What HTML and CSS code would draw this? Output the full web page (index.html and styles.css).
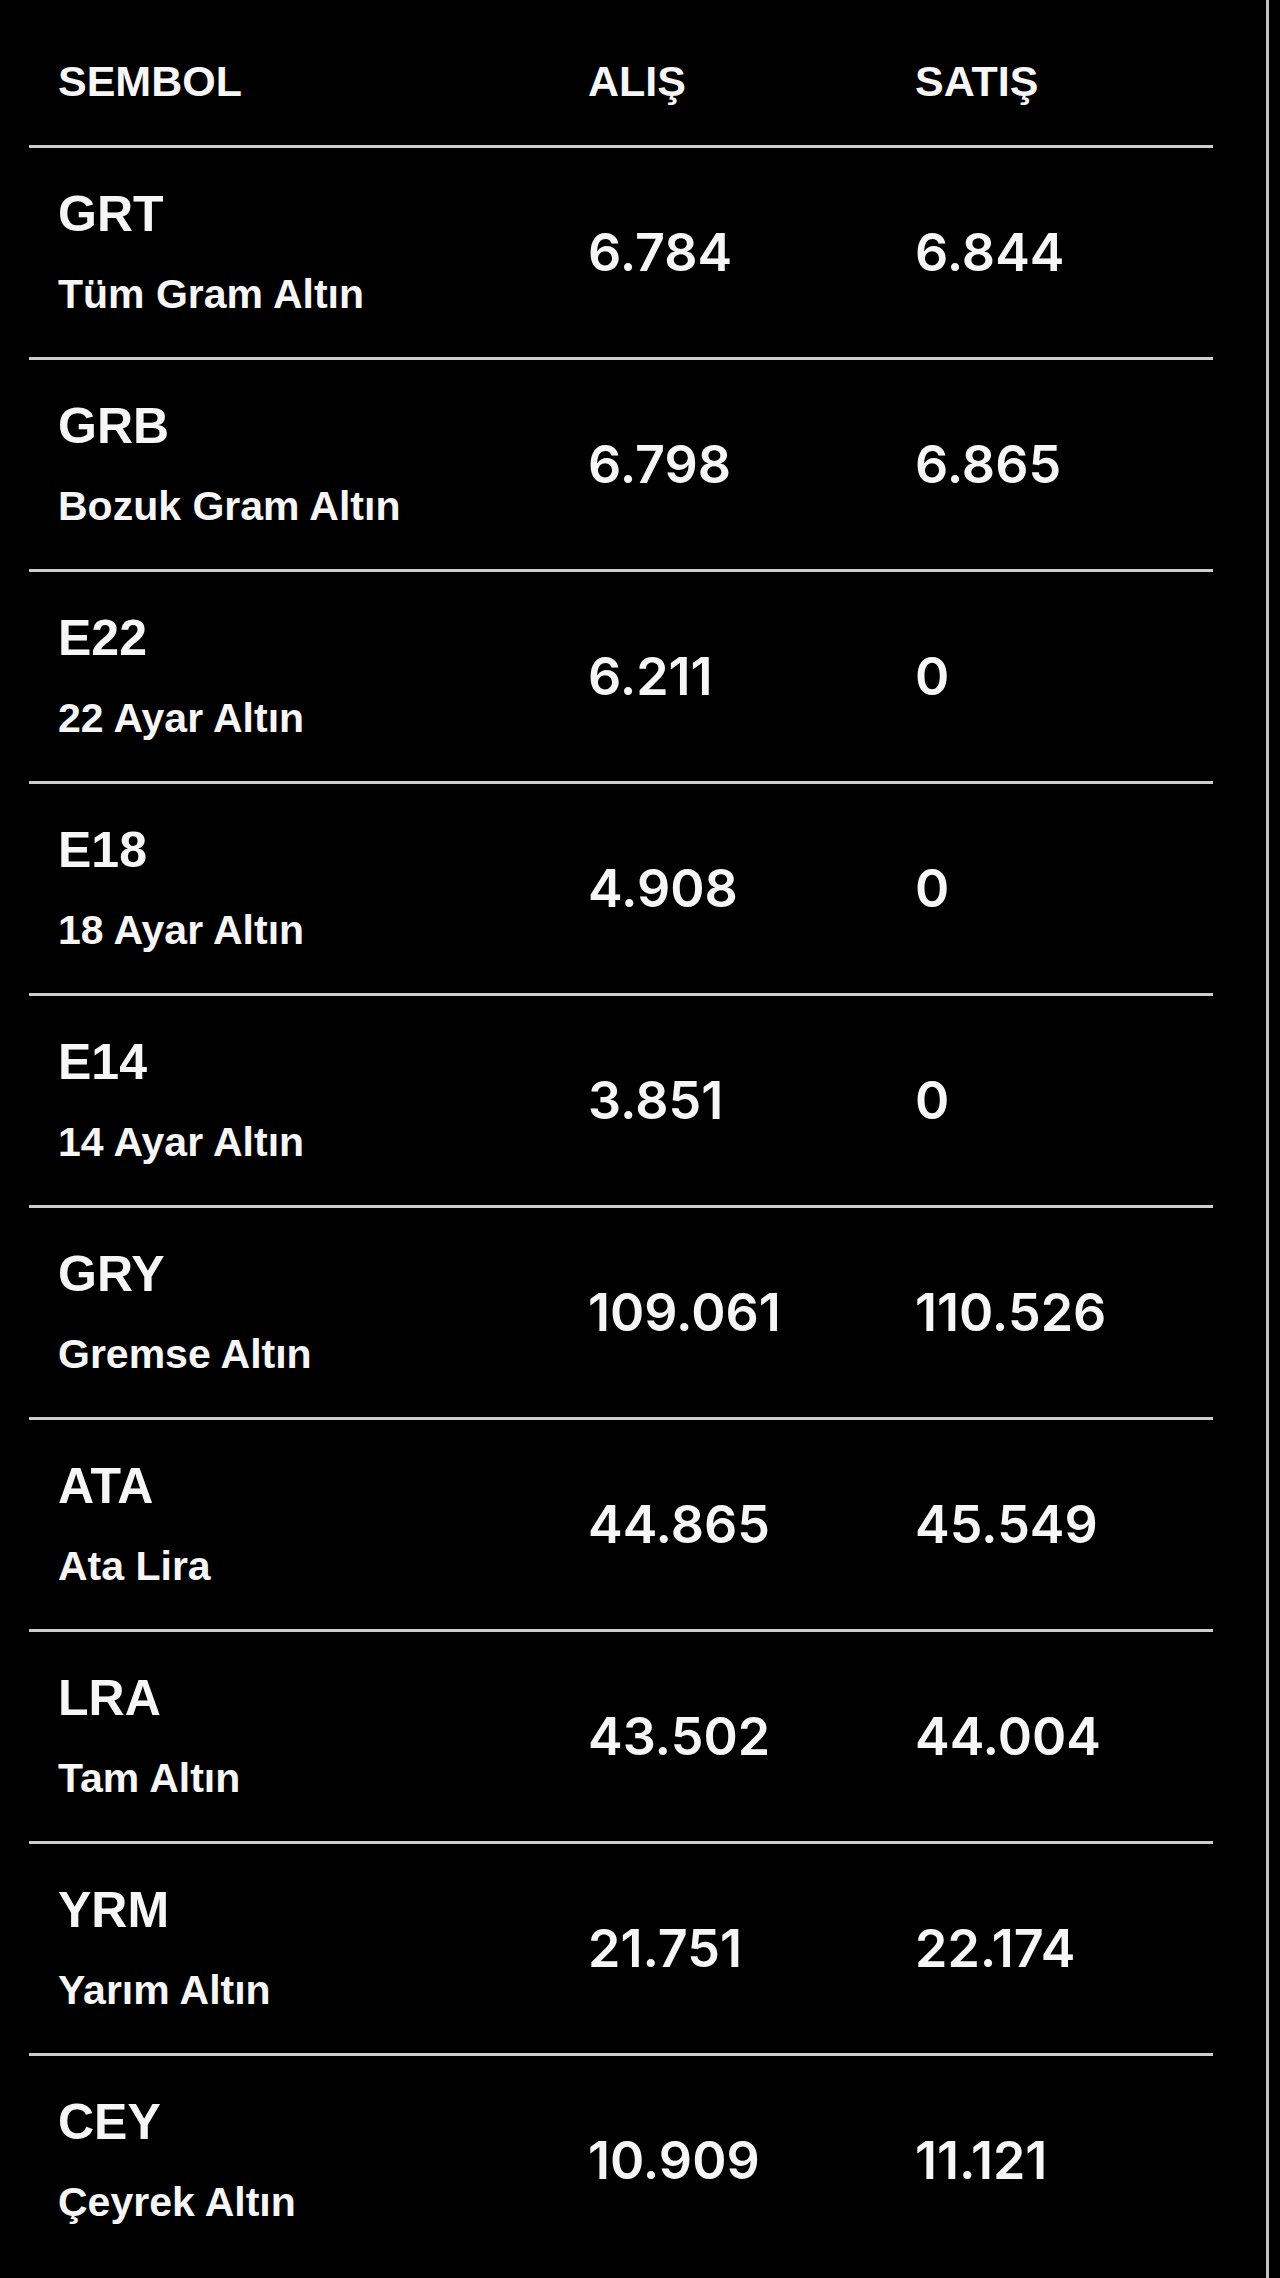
FILE: index.html
```html
<!DOCTYPE html>
<html lang="tr">
<head>
<meta charset="utf-8">
<title>Altın Fiyatları</title>
<link rel="stylesheet" href="styles.css">
</head>
<body>
<div class="page">
  <div class="table">
    <div class="row head">
      <div class="cell">SEMBOL</div>
      <div class="cell">ALIŞ</div>
      <div class="cell">SATIŞ</div>
    </div>
    <div class="row">
      <div class="cell sym"><div class="code">GRT</div><div class="name">Tüm Gram Altın</div></div>
      <div class="cell val">6.784</div>
      <div class="cell val">6.844</div>
    </div>
    <div class="row">
      <div class="cell sym"><div class="code">GRB</div><div class="name">Bozuk Gram Altın</div></div>
      <div class="cell val">6.798</div>
      <div class="cell val">6.865</div>
    </div>
    <div class="row">
      <div class="cell sym"><div class="code">E22</div><div class="name">22 Ayar Altın</div></div>
      <div class="cell val">6.211</div>
      <div class="cell val">0</div>
    </div>
    <div class="row">
      <div class="cell sym"><div class="code">E18</div><div class="name">18 Ayar Altın</div></div>
      <div class="cell val">4.908</div>
      <div class="cell val">0</div>
    </div>
    <div class="row">
      <div class="cell sym"><div class="code">E14</div><div class="name">14 Ayar Altın</div></div>
      <div class="cell val">3.851</div>
      <div class="cell val">0</div>
    </div>
    <div class="row">
      <div class="cell sym"><div class="code">GRY</div><div class="name">Gremse Altın</div></div>
      <div class="cell val">109.061</div>
      <div class="cell val">110.526</div>
    </div>
    <div class="row">
      <div class="cell sym"><div class="code">ATA</div><div class="name">Ata Lira</div></div>
      <div class="cell val">44.865</div>
      <div class="cell val">45.549</div>
    </div>
    <div class="row">
      <div class="cell sym"><div class="code">LRA</div><div class="name">Tam Altın</div></div>
      <div class="cell val">43.502</div>
      <div class="cell val">44.004</div>
    </div>
    <div class="row">
      <div class="cell sym"><div class="code">YRM</div><div class="name">Yarım Altın</div></div>
      <div class="cell val">21.751</div>
      <div class="cell val">22.174</div>
    </div>
    <div class="row last">
      <div class="cell sym"><div class="code">CEY</div><div class="name">Çeyrek Altın</div></div>
      <div class="cell val">10.909</div>
      <div class="cell val">11.121</div>
    </div>
  </div>
</div>
</body>
</html>
```
FILE: styles.css
```css
html, body {
  margin: 0;
  padding: 0;
  background: #000;
}

body {
  font-family: "Liberation Sans", Arial, sans-serif;
  font-weight: 700;
  color: #f6f6f6;
}

.page {
  width: 1266px;
  min-height: 2278px;
  border-right: 3px solid #c4c4c4;
  box-sizing: content-box;
}

.table {
  width: 1184px;
  margin-left: 29px;
}

.row {
  display: grid;
  grid-template-columns: 530px 327px 327px;
  align-items: center;
  height: 209px;
  border-bottom: 3px solid #cdcdcd;
}

.row.last {
  border-bottom: none;
}

.row.head {
  height: 145px;
  align-items: start;
}

.cell {
  padding-left: 29px;
}

.head .cell {
  font-size: 43px;
  line-height: 48px;
  padding-top: 57px;
}

.sym {
  align-self: stretch;
  display: flex;
  flex-direction: column;
  padding-top: 38px;
}

.code {
  font-size: 50px;
  line-height: 56px;
}

.name {
  font-size: 41px;
  line-height: 48px;
  margin-top: 28px;
}

.val {
  font-family: Inter, "Liberation Sans", sans-serif;
  font-weight: 600;
  font-variant-numeric: proportional-nums;
  font-size: 52px;
  line-height: 60px;
}
```
